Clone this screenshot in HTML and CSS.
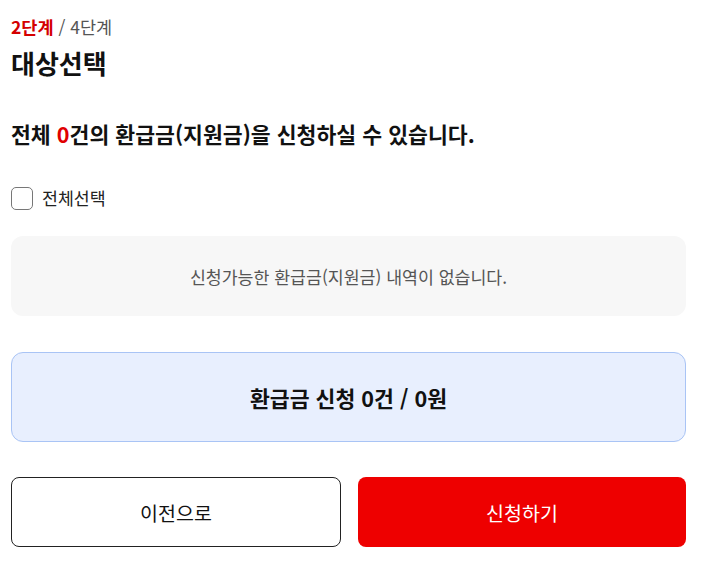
FILE: index.html
```html
<!DOCTYPE html>
<html lang="ko">
<head>
<meta charset="utf-8">
<link rel="stylesheet" href="styles.css">
</head>
<body>
<div class="page">
  <div class="step"><span class="step-cur">2단계</span> / 4단계</div>
  <h1 class="title">대상선택</h1>
  <p class="summary">전체 <span class="red">0</span>건의 환급금(지원금)을 신청하실 수 있습니다.</p>
  <label class="check-all"><span class="box"></span><span>전체선택</span></label>
  <div class="empty">신청가능한 환급금(지원금) 내역이 없습니다.</div>
  <div class="total">환급금 신청 0건 / 0원</div>
  <div class="actions">
    <button class="btn btn-prev">이전으로</button>
    <button class="btn btn-apply">신청하기</button>
  </div>
</div>
</body>
</html>
```
FILE: styles.css
```css
html, body { margin: 0; padding: 0; background: #fff; }
body { font-family: "Noto Sans CJK KR", "Noto Sans", sans-serif; color: #111; }
.page { padding: 14px 15px 0 11px; }
.step { font-size: 17.5px; line-height: 26px; color: #555; }
.step-cur { color: #d40000; font-weight: 700; }
.title { margin: 5px 0 0; font-size: 26px; line-height: 36px; font-weight: 700; color: #111; }
.summary { margin: 37px 0 0; font-size: 21.6px; line-height: 32px; font-weight: 700; color: #111; }
.red { color: #e00000; }
.check-all { display: flex; align-items: center; gap: 9px; margin-top: 36px; font-size: 17.3px; line-height: 24px; color: #222; }
.box { width: 22px; height: 23px; border: 1px solid #777; border-radius: 5px; box-sizing: border-box; display: block; }
.empty { margin-top: 26px; height: 80px; background: #f7f7f7; border-radius: 12px; display: flex; align-items: center; justify-content: center; font-size: 17.3px; color: #555; }
.total { margin-top: 36px; height: 90px; box-sizing: border-box; background: #e8effe; border: 1px solid #a9c4f5; border-radius: 12px; display: flex; align-items: center; justify-content: center; font-size: 21.6px; font-weight: 700; color: #111; }
.actions { display: flex; gap: 17px; margin-top: 35px; }
.btn { flex: 1; height: 70px; border-radius: 8px; font-family: inherit; font-size: 19.5px; box-sizing: border-box; }
.btn-prev { background: #fff; border: 1px solid #222; color: #111; }
.btn-apply { background: #ee0000; border: none; color: #fff; }
```
